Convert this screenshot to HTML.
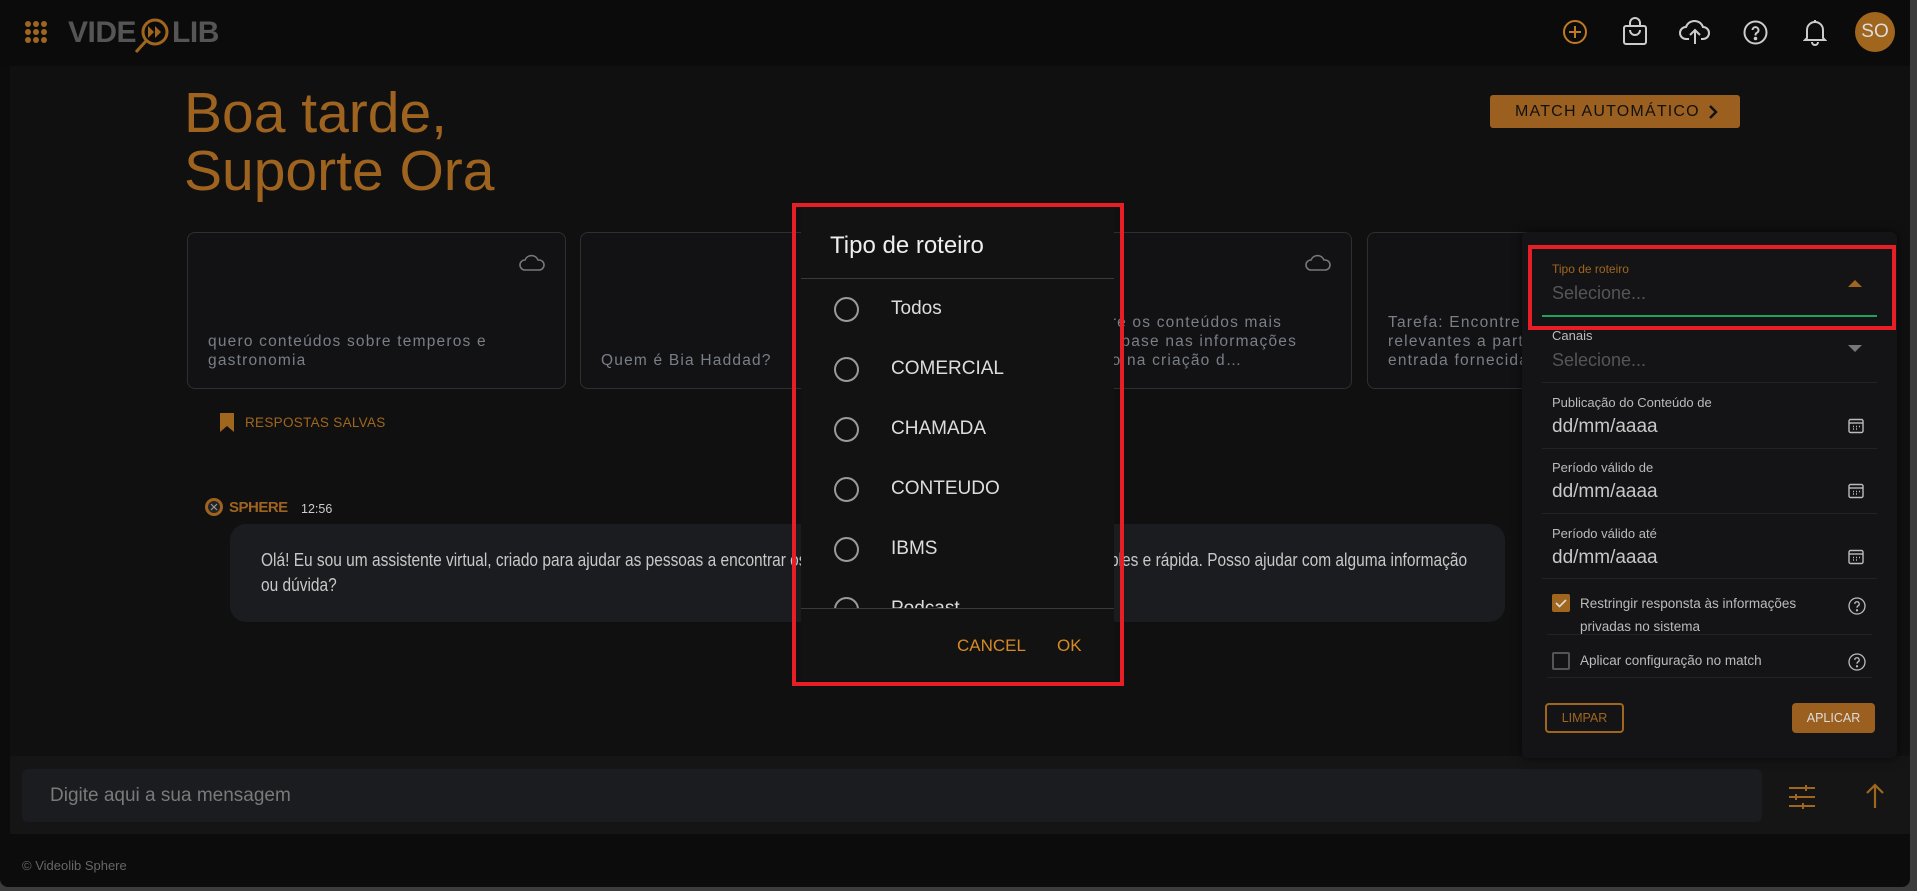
<!DOCTYPE html>
<html><head><meta charset="utf-8"><style>
*{box-sizing:border-box;margin:0;padding:0}
body{width:1917px;height:891px;background:#3c3c3c;font-family:"Liberation Sans",sans-serif;position:relative;overflow:hidden}
.win{position:absolute;left:0;top:0;width:1910px;height:887px;background:#0c0c0c;border-radius:0 0 8px 8px;overflow:hidden}
.abs{position:absolute}
.top{left:0;top:0;width:1910px;height:66px;background:#0b0b0b}
.main{left:10px;top:66px;width:1900px;height:690px;background:#101011}
.card{position:absolute;top:232px;width:379px;height:157px;border:1px solid #2e2f31;border-radius:8px;background:#121214}
.card .t{position:absolute;left:20px;bottom:18px;right:20px;color:#7a7f87;font-size:15.5px;letter-spacing:1.2px;line-height:19px}
.cloud{position:absolute;right:20px;top:20px}
.lbl{position:absolute;left:1552px;color:#bbb;font-size:13px}
.val{position:absolute;left:1552px;color:#c8c8c8;font-size:19px}
.div{position:absolute;left:1542px;width:1335px;height:1px;background:#222}
.cal{position:absolute;left:1848px}
.help{position:absolute;left:1848px}
.radio{position:absolute;left:834px;width:25px;height:25px;border:2px solid #9a9a9a;border-radius:50%}
.rl{position:absolute;left:891px;color:#ddd;font-size:19px}
</style></head><body>
<div class="win">
<div class="abs top"></div>
<svg class="abs" style="left:24px;top:20px" width="24" height="24" viewBox="0 0 24 24" fill="#a0661e">
<circle cx="4" cy="4" r="3"/><circle cx="12" cy="4" r="3"/><circle cx="20" cy="4" r="3"/>
<circle cx="4" cy="12" r="3"/><circle cx="12" cy="12" r="3"/><circle cx="20" cy="12" r="3"/>
<circle cx="4" cy="20" r="3"/><circle cx="12" cy="20" r="3"/><circle cx="20" cy="20" r="3"/></svg>
<div class="abs" style="left:68px;top:16px;font-size:30px;font-weight:bold;color:#555;letter-spacing:-0.5px">VIDE<span style="display:inline-block;width:36px"></span>LIB</div>
<svg class="abs" style="left:134px;top:14px" width="38" height="40" viewBox="0 0 38 40"><circle cx="21" cy="18" r="12" fill="none" stroke="#a0661e" stroke-width="3"/><line x1="12" y1="27" x2="2" y2="38" stroke="#a0661e" stroke-width="3"/><path d="M14 12l6 6-6 6zM21 12l6 6-6 6z" fill="#a0661e"/></svg>
<svg class="abs" style="left:1562px;top:19px" width="26" height="26" viewBox="0 0 26 26" fill="none" stroke="#c07a25" stroke-width="2"><circle cx="13" cy="13" r="11"/><path d="M13 7v12M7 13h12"/></svg>
<svg class="abs" style="left:1622px;top:17px" width="26" height="29" viewBox="0 0 26 29" fill="none" stroke="#ccc" stroke-width="2"><rect x="2" y="9" width="22" height="18" rx="2"/><path d="M8 9V6a5 5 0 0 1 10 0v3M8 13a5 5 0 0 0 10 0"/></svg>
<svg class="abs" style="left:1679px;top:18px" width="32" height="27" viewBox="0 0 32 27" fill="none" stroke="#ccc" stroke-width="2"><path d="M10 21H7a6 6 0 0 1 0-12 9 9 0 0 1 17 0 5.5 5.5 0 0 1 0 12h-2"/><path d="M16 26V12M11 17l5-5 5 5"/></svg>
<svg class="abs" style="left:1743px;top:20px" width="25" height="25" viewBox="0 0 25 25" fill="none" stroke="#ccc" stroke-width="2"><circle cx="12.5" cy="12.5" r="11"/><path d="M9.5 10a3 3 0 1 1 4 3c-1 .5-1 1.5-1 2.5"/><circle cx="12.5" cy="18.5" r=".8" fill="#ccc"/></svg>
<svg class="abs" style="left:1803px;top:18px" width="24" height="28" viewBox="0 0 24 28" fill="none" stroke="#ccc" stroke-width="2"><path d="M12 2v2M4 20V12a8 8 0 0 1 16 0v8l2 2H2z"/><path d="M9 24a3 3 0 0 0 6 0"/></svg>
<div class="abs" style="left:1855px;top:12px;width:40px;height:40px;border-radius:50%;background:#a0661e;color:#ddd;font-size:19px;text-align:center;line-height:40px">SO</div>

<div class="abs main"></div>
<div class="abs" style="left:184px;top:84px;font-size:57px;line-height:58px;color:#9e631f">Boa tarde,<br>Suporte Ora</div>
<div class="abs" style="left:1490px;top:95px;width:250px;height:33px;background:#9b6020;border-radius:3px;color:#111;font-size:16px;letter-spacing:1.2px;line-height:33px;padding-left:25px">MATCH AUTOMÁTICO<svg style="position:absolute;left:218px;top:10px" width="10" height="14" viewBox="0 0 10 14" fill="none" stroke="#111" stroke-width="2.5"><path d="M2 1l6 6-6 6"/></svg></div>

<div class="card" style="left:187px"><svg class="cloud" width="26" height="18" viewBox="0 0 26 18" fill="none" stroke="#777" stroke-width="1.6"><path d="M7 17H6a5 5 0 0 1 0-10 7 7 0 0 1 13 0h1a5 5 0 0 1 0 10z"/></svg><div class="t">quero conteúdos sobre temperos e gastronomia</div></div>
<div class="card" style="left:580px"><div class="t">Quem é Bia Haddad?</div></div>
<div class="card" style="left:973px"><svg class="cloud" width="26" height="18" viewBox="0 0 26 18" fill="none" stroke="#777" stroke-width="1.6"><path d="M7 17H6a5 5 0 0 1 0-10 7 7 0 0 1 13 0h1a5 5 0 0 1 0 10z"/></svg><div class="t" style="white-space:nowrap;overflow:hidden">Tarefa: Encontre os conteúdos mais<br>relevantes com base nas informações<br>abaixo, focando na criação d…</div></div>
<div class="card" style="left:1367px"><div class="t" style="white-space:nowrap">Tarefa: Encontre os conteúdos mais<br>relevantes a partir da entrada<br>entrada fornecida pelo usuário</div></div>

<svg class="abs" style="left:220px;top:413px" width="14" height="19" viewBox="0 0 14 19"><path d="M0 0h14v19l-7-6-7 6z" fill="#a0661e"/></svg>
<div class="abs" style="left:245px;top:415px;font-size:13.5px;color:#a0661e;letter-spacing:.3px">RESPOSTAS SALVAS</div>

<svg class="abs" style="left:204px;top:497px" width="20" height="20" viewBox="0 0 20 20"><circle cx="10" cy="10" r="9" fill="#9e631f"/><circle cx="10" cy="10" r="6" fill="#222"/><path d="M7 7l6 6M13 7l-6 6" stroke="#999" stroke-width="1.2"/></svg>
<div class="abs" style="left:229px;top:499px;font-size:15px;font-weight:bold;color:#9e631f;letter-spacing:-.5px">SPHERE</div>
<div class="abs" style="left:301px;top:502px;font-size:12.5px;color:#ccc">12:56</div>
<div class="abs" style="left:230px;top:524px;width:1275px;height:98px;background:#1b1c1f;border-radius:16px"></div>
<div class="abs" style="left:261px;top:548px;width:1412px;font-size:18px;line-height:25px;color:#c8c8c8;transform:scaleX(0.86);transform-origin:left">Olá! Eu sou um assistente virtual, criado para ajudar as pessoas a encontrar os conteúdos da Videolib de maneira mais simples e rápida. Posso ajudar com alguma informação ou dúvida?</div>

<div class="abs" style="left:10px;top:756px;width:1900px;height:78px;background:#151516"></div>
<div class="abs" style="left:22px;top:769px;width:1740px;height:53px;background:#1b1c1f;border-radius:6px"></div>
<div class="abs" style="left:50px;top:785px;font-size:19px;color:#7a7a7a">Digite aqui a sua mensagem</div>
<svg class="abs" style="left:1788px;top:784px" width="28" height="26" viewBox="0 0 28 26" stroke="#a0661e" stroke-width="2" fill="none"><path d="M1 4h26M1 13h26M1 22h26"/><path d="M18 1v6M8 10v6M15 19v6"/></svg>
<svg class="abs" style="left:1866px;top:783px" width="18" height="26" viewBox="0 0 18 26" stroke="#a0661e" stroke-width="2.2" fill="none"><path d="M9 25V2M1 10l8-8 8 8"/></svg>
<div class="abs" style="left:22px;top:858px;font-size:13px;color:#666">© Videolib Sphere</div>

<div class="abs" style="left:1522px;top:232px;width:375px;height:526px;background:#141416;border-radius:6px;box-shadow:0 0 10px rgba(0,0,0,.6)"></div>
<div class="abs" style="left:1528px;top:245px;width:368px;height:85px;border:4px solid #e61e25"></div>
<div class="abs" style="left:1552px;top:262px;font-size:12px;color:#a0661e">Tipo de roteiro</div>
<div class="abs" style="left:1552px;top:283px;font-size:18px;color:#555">Selecione...</div>
<svg class="abs" style="left:1848px;top:279px" width="14" height="8"><path d="M0 8l7-7 7 7z" fill="#a0661e"/></svg>
<div class="abs" style="left:1542px;top:315px;width:335px;height:2px;background:#1fa35a"></div>
<div class="lbl" style="top:328px">Canais</div>
<div class="abs" style="left:1552px;top:350px;font-size:18px;color:#555">Selecione...</div>
<svg class="abs" style="left:1848px;top:345px" width="14" height="8"><path d="M0 0l7 7 7-7z" fill="#777"/></svg>
<div class="div" style="top:382px;width:335px"></div>
<div class="lbl" style="top:395px">Publicação do Conteúdo de</div>
<div class="val" style="top:416px">dd/mm/aaaa</div>
<div class="div" style="top:448px;width:335px"></div>
<div class="lbl" style="top:460px">Período válido de</div>
<div class="val" style="top:481px">dd/mm/aaaa</div>
<div class="div" style="top:513px;width:335px"></div>
<div class="lbl" style="top:526px">Período válido até</div>
<div class="val" style="top:547px">dd/mm/aaaa</div>
<div class="div" style="top:578px;width:335px"></div>
<svg class="cal" style="top:418px" width="16" height="16" viewBox="0 0 16 16" fill="none" stroke="#bbb" stroke-width="1.4"><rect x="1" y="1.5" width="14" height="13" rx="1.5"/><path d="M1 5h14"/><path d="M5 8.5h1M8 8.5h1M11 8.5h1M5 11h1M8 11h1" stroke-width="1.6"/></svg>
<svg class="cal" style="top:483px" width="16" height="16" viewBox="0 0 16 16" fill="none" stroke="#bbb" stroke-width="1.4"><rect x="1" y="1.5" width="14" height="13" rx="1.5"/><path d="M1 5h14"/><path d="M5 8.5h1M8 8.5h1M11 8.5h1M5 11h1M8 11h1" stroke-width="1.6"/></svg>
<svg class="cal" style="top:549px" width="16" height="16" viewBox="0 0 16 16" fill="none" stroke="#bbb" stroke-width="1.4"><rect x="1" y="1.5" width="14" height="13" rx="1.5"/><path d="M1 5h14"/><path d="M5 8.5h1M8 8.5h1M11 8.5h1M5 11h1M8 11h1" stroke-width="1.6"/></svg>
<div class="abs" style="left:1552px;top:594px;width:18px;height:18px;background:#a0661e;border-radius:2px"><svg width="18" height="18"><path d="M4 9l3.5 3.5L14 6" stroke="#ddd" stroke-width="1.6" fill="none"/></svg></div>
<div class="abs" style="left:1580px;top:592px;font-size:13.5px;line-height:23px;color:#bbb">Restringir responsta às informações<br>privadas no sistema</div>
<div class="div" style="top:634px;left:1547px;width:325px"></div>
<div class="abs" style="left:1552px;top:652px;width:18px;height:18px;border:2px solid #555;border-radius:2px"></div>
<div class="abs" style="left:1580px;top:653px;font-size:13.5px;color:#bbb">Aplicar configuração no match</div>
<div class="div" style="top:677px;left:1547px;width:325px"></div>
<svg class="help" style="top:597px" width="18" height="18" viewBox="0 0 18 18" fill="none" stroke="#bbb" stroke-width="1.3"><circle cx="9" cy="9" r="8"/><path d="M6.8 7a2.2 2.2 0 1 1 3 2c-.8.4-.8 1-.8 1.8"/><circle cx="9" cy="13.3" r=".5" fill="#bbb"/></svg>
<svg class="help" style="top:653px" width="18" height="18" viewBox="0 0 18 18" fill="none" stroke="#bbb" stroke-width="1.3"><circle cx="9" cy="9" r="8"/><path d="M6.8 7a2.2 2.2 0 1 1 3 2c-.8.4-.8 1-.8 1.8"/><circle cx="9" cy="13.3" r=".5" fill="#bbb"/></svg>
<div class="abs" style="left:1545px;top:703px;width:79px;height:30px;border:2px solid #a0661e;border-radius:4px;color:#a0661e;font-size:12.5px;text-align:center;line-height:26px">LIMPAR</div>
<div class="abs" style="left:1792px;top:703px;width:83px;height:30px;background:#9b6020;border-radius:4px;color:#ddd;font-size:12.5px;text-align:center;line-height:30px">APLICAR</div>

<div class="abs" style="left:792px;top:203px;width:332px;height:483px;border:4px solid #e61e25"></div>
<div class="abs" style="left:801px;top:208px;width:313px;height:472px;background:#121212;overflow:hidden">
<div class="abs" style="left:29px;top:24px;font-size:24px;color:#eee">Tipo de roteiro</div>
<div class="abs" style="left:0;top:70px;width:313px;height:1px;background:#3a3a3a"></div>
<div class="abs" style="left:0;top:71px;width:313px;height:329px;overflow:hidden">
<div class="radio" style="left:33px;top:18px"></div><div class="rl" style="left:90px;top:19px">Todos</div>
<div class="radio" style="left:33px;top:78px"></div><div class="rl" style="left:90px;top:79px">COMERCIAL</div>
<div class="radio" style="left:33px;top:138px"></div><div class="rl" style="left:90px;top:139px">CHAMADA</div>
<div class="radio" style="left:33px;top:198px"></div><div class="rl" style="left:90px;top:199px">CONTEUDO</div>
<div class="radio" style="left:33px;top:258px"></div><div class="rl" style="left:90px;top:259px">IBMS</div>
<div class="radio" style="left:33px;top:318px"></div><div class="rl" style="left:90px;top:319px">Podcast</div>
</div>
<div class="abs" style="left:0;top:400px;width:313px;height:1px;background:#3a3a3a"></div>
<div class="abs" style="left:156px;top:428px;font-size:17px;color:#d68a25">CANCEL</div>
<div class="abs" style="left:256px;top:428px;font-size:17px;color:#d68a25">OK</div>
</div>
</div>
</body></html>
